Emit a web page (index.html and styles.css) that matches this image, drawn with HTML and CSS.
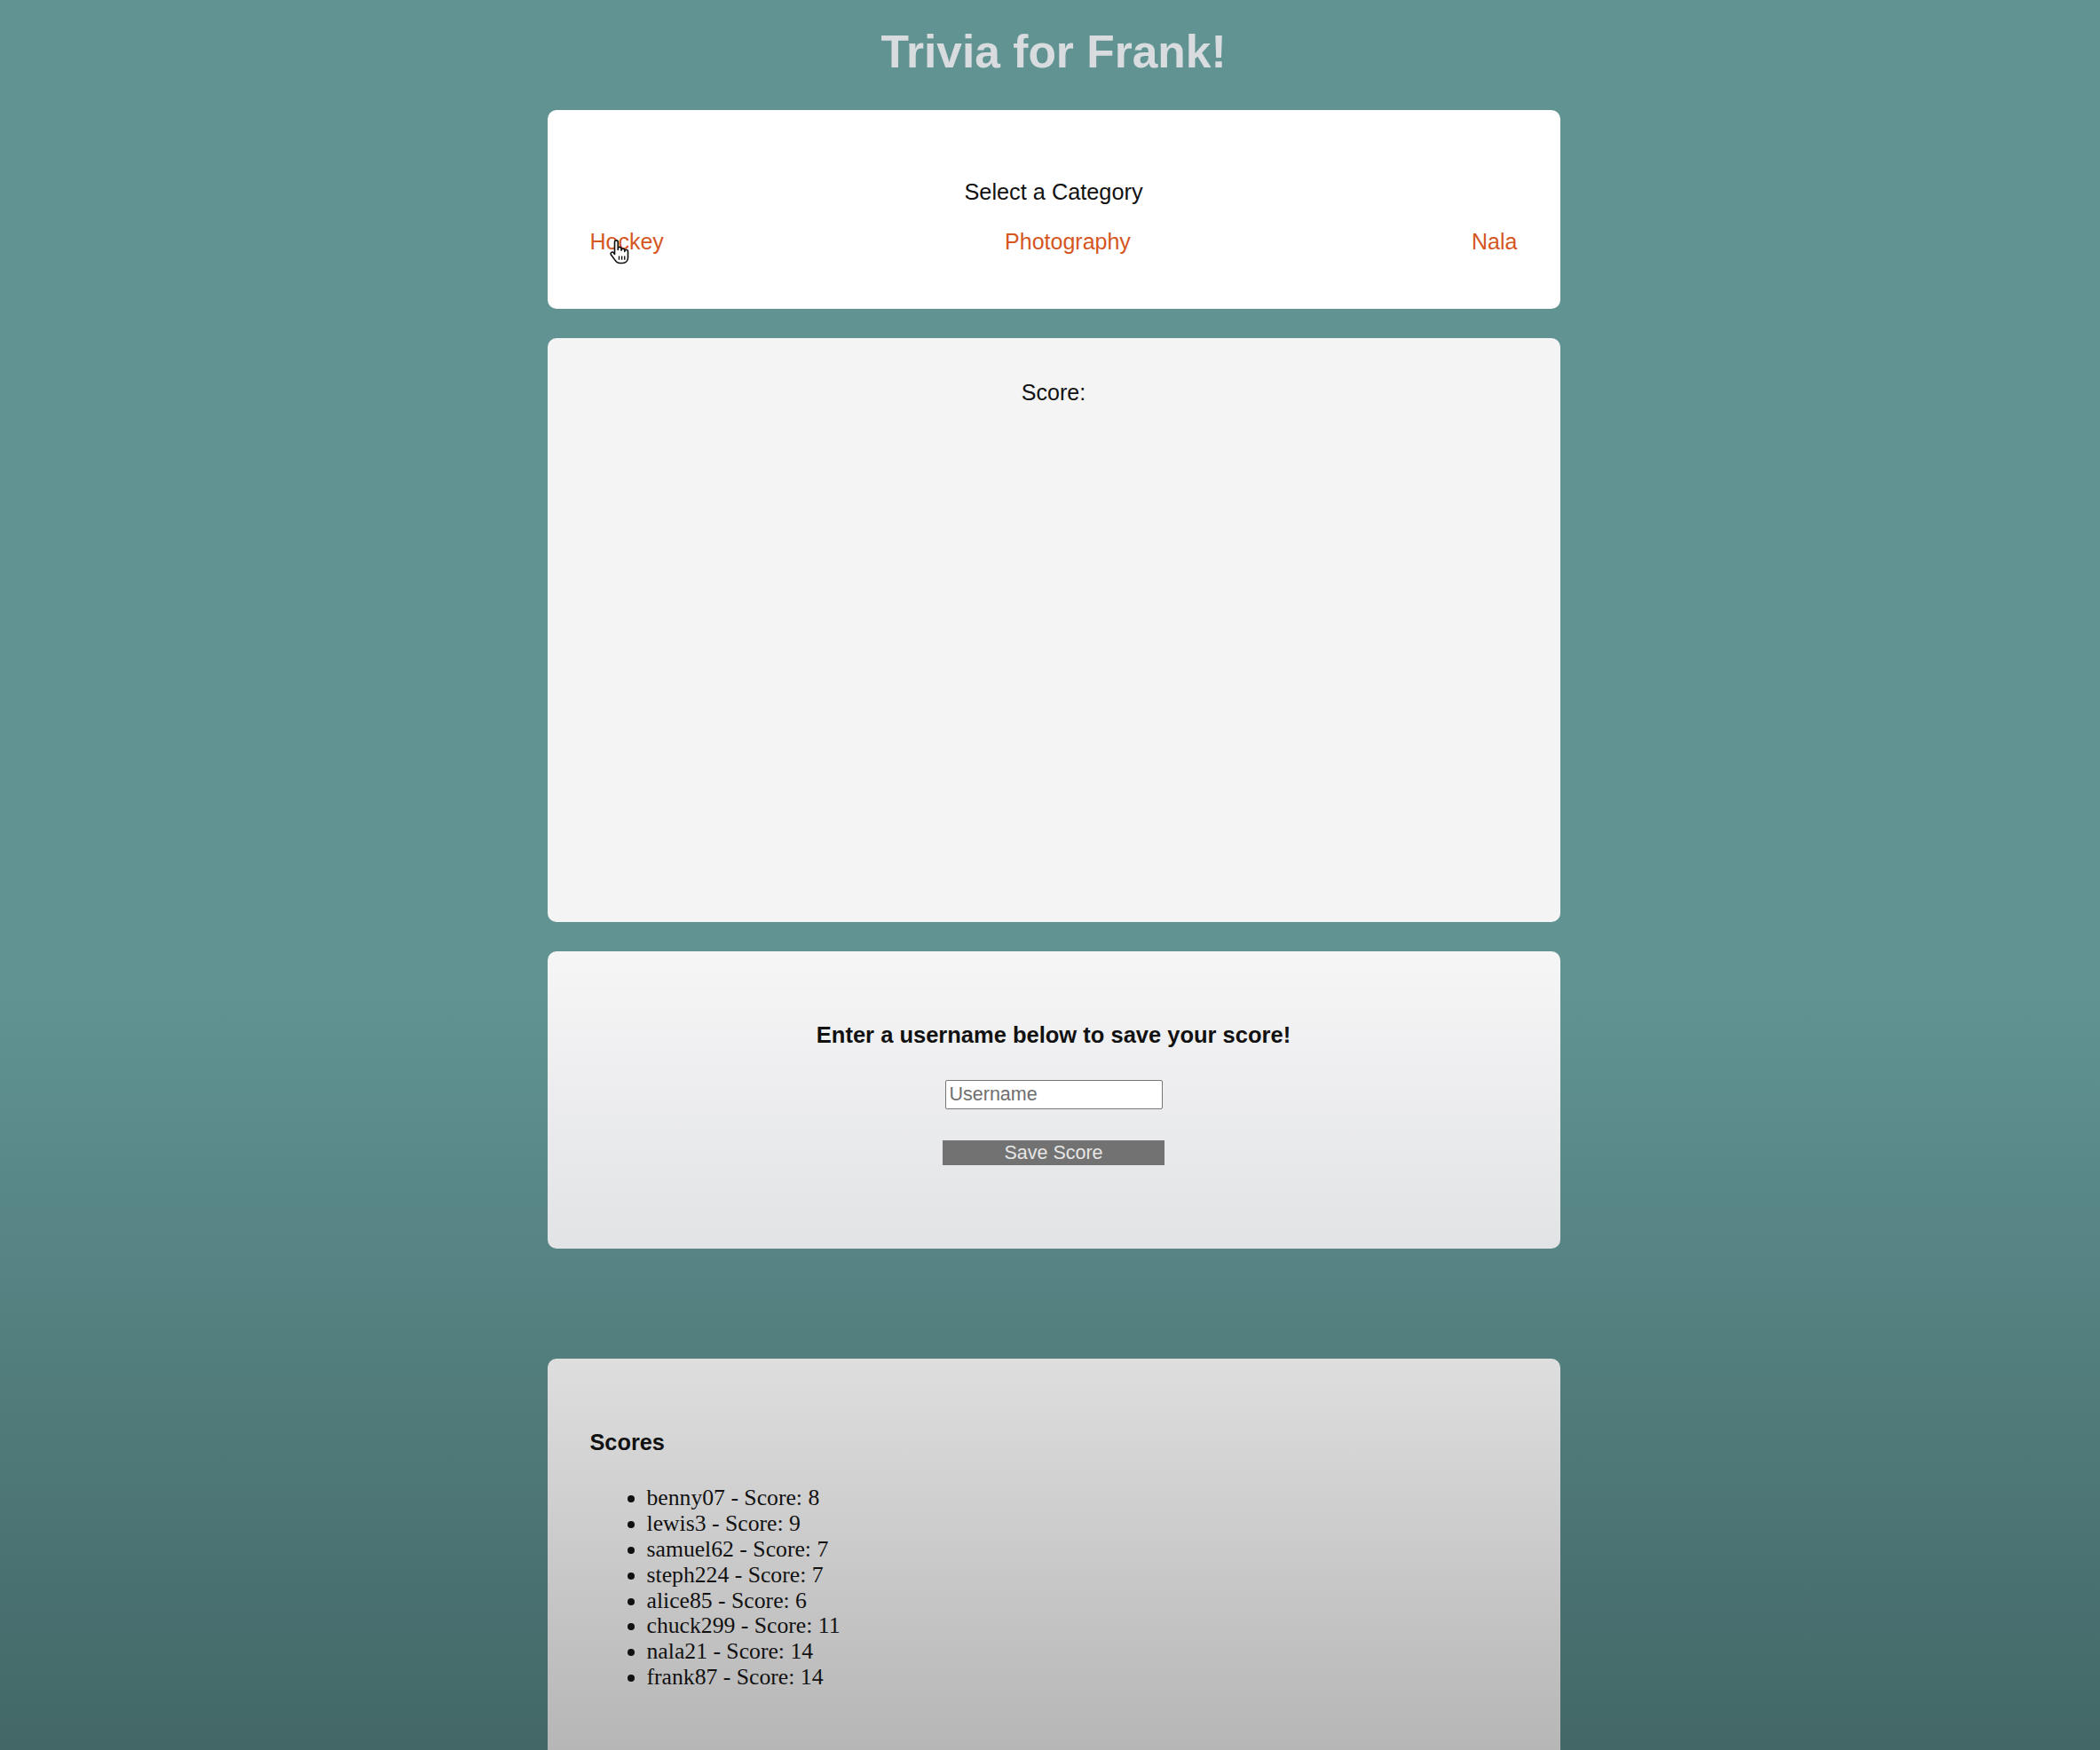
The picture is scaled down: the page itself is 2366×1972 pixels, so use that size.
FILE: index.html
```html
<!DOCTYPE html>
<html lang="en">
<head>
  <meta charset="UTF-8">
  <meta name="viewport" content="width=device-width, initial-scale=1.0">
  <title>Trivia for Frank!</title>
  <link rel="stylesheet" href="styles.css">
</head>
<body>
  <h1 class="title">Trivia for Frank!</h1>

  <div class="container">
    <div class="card categories">
      <h2 class="card-heading">Select a Category</h2>
      <div class="category-list">
        <a href="#" class="category cursor-wrap">Hockey
          <svg class="cursor" width="25" height="30" viewBox="0 0 20 24">
            <path d="M6 12 V3 a1.5 1.5 0 0 1 3 0 V10 V9 a1.5 1.5 0 0 1 3 0 V10.5 a1.5 1.5 0 0 1 3 0 V11.5 a1.5 1.5 0 0 1 3 0 V17 c0 3 -2 5 -5 5 H10.5 c-2 0 -3 -1 -4 -2.5 L2.6 14.2 a1.5 1.5 0 0 1 2.4 -1.7 L6 14 Z" fill="#fff" stroke="#111" stroke-width="1.3" stroke-linejoin="round"/>
            <path d="M10 15.5 V19 M12.5 15.5 V19 M15 15.5 V19" stroke="#111" stroke-width="1.1"/>
          </svg>
        </a>
        <a href="#" class="category">Photography</a>
        <a href="#" class="category">Nala</a>
      </div>
    </div>

    <div class="card question">
      <p class="score-label">Score:</p>
    </div>

    <div class="card save">
      <h4 class="save-heading">Enter a username below to save your score!</h4>
      <input type="text" class="username" placeholder="Username">
      <button class="save-btn">Save Score</button>
    </div>

    <div class="card scores">
      <h3 class="scores-heading">Scores</h3>
      <ul class="score-list">
        <li>benny07 - Score: 8</li>
        <li>lewis3 - Score: 9</li>
        <li>samuel62 - Score: 7</li>
        <li>steph224 - Score: 7</li>
        <li>alice85 - Score: 6</li>
        <li>chuck299 - Score: 11</li>
        <li>nala21 - Score: 14</li>
        <li>frank87 - Score: 14</li>
      </ul>
    </div>
  </div>
</body>
</html>
```

FILE: styles.css
```css
body {
  font-family: "Liberation Sans", Arial, sans-serif;
  font-size: 25px;
  line-height: 1.15;
  margin: 0;
  padding-left: 8px;
  min-height: 1972px;
  background-color: #436767;
  background-image: linear-gradient(to bottom, #619393 0, #619393 1120px, #436767 1972px);
  background-repeat: no-repeat;
  overflow: hidden;
}
.title {
  margin: 0;
  padding-top: 29px;
  font-size: 51.5px;
  line-height: 58px;
  color: #d8dcde;
  text-align: center;
}
.container {
  width: 1141px;
  margin: 37px auto 0;
}
.card {
  border-radius: 10px;
  padding-left: 48px;
  padding-right: 48px;
  box-sizing: border-box;
}
.categories {
  background-color: #ffffff;
  padding-top: 78px;
  padding-bottom: 61px;
}
.card-heading {
  margin: 0 0 27px;
  font-size: 25.3px;
  font-weight: normal;
  color: #111;
  text-align: center;
}
.category-list {
  display: flex;
  justify-content: space-between;
}
.category {
  color: #d5561f;
  text-decoration: none;
}
.cursor-wrap {
  position: relative;
}
.cursor {
  position: absolute;
  left: 20px;
  top: 11px;
}
.question {
  margin-top: 33px;
  height: 658px;
  padding-top: 47px;
  background-color: #f4f4f5;
}
.score-label {
  margin: 0;
  text-align: center;
  color: #111;
}
.save {
  margin-top: 33px;
  height: 335px;
  padding-top: 80px;
  background-image: linear-gradient(to bottom, #f6f6f7, #e2e3e5);
  display: flex;
  flex-direction: column;
  align-items: center;
}
.save-heading {
  margin: 0 0 36px;
  font-size: 25.5px;
  color: #111;
}
.username {
  width: 245px;
  height: 33px;
  box-sizing: border-box;
  border: 1.5px solid #777;
  border-radius: 2px;
  padding: 0 4px;
  font-family: "Liberation Sans", Arial, sans-serif;
  font-size: 21.5px;
  background: #fff;
}
.username::placeholder {
  color: #6f6f6f;
}
.save-btn {
  margin-top: 35px;
  width: 250px;
  height: 28px;
  border: none;
  background-color: #727272;
  color: #e6e6e6;
  font-family: "Liberation Sans", Arial, sans-serif;
  font-size: 21.5px;
  line-height: 28px;
  padding: 0;
}
.scores {
  margin-top: 124px;
  padding-top: 80px;
  padding-bottom: 120px;
  background-image: linear-gradient(to bottom, #dedede 0, #b6b6b6 442px);
}
.scores-heading {
  margin: 0;
  font-size: 25.3px;
  color: #111;
}
.score-list {
  margin: 34px 0 0;
  padding-left: 64px;
  font-family: "Liberation Serif", "Times New Roman", serif;
  font-size: 25.7px;
  line-height: 28.9px;
  color: #111;
}
```
